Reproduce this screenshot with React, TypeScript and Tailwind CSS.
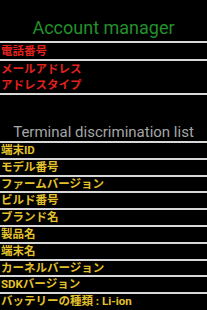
const accountItems = [['電話番号'], ['メールアドレス', 'アドレスタイプ']];

const terminalItems = [
  '端末ID',
  'モデル番号',
  'ファームバージョン',
  'ビルド番号',
  'ブランド名',
  '製品名',
  '端末名',
  'カーネルバージョン',
  'SDKバージョン',
  'バッテリーの種類 : Li-ion',
];

const jp = "font-['Roboto','Noto_Sans_CJK_JP',sans-serif] font-bold text-[11.5px]";

function Divider() {
  return <div className="h-[2px] bg-[#d8d8d8]" />;
}

export default function App() {
  return (
    <div className="w-[207px] h-[310px] overflow-hidden bg-black font-['Roboto','Noto_Sans_CJK_JP',sans-serif]">
      <div className="pt-[17px] pb-[3px] text-center text-[18px] leading-[21px] text-[#23912a]">
        Account manager
      </div>
      <Divider />
      {accountItems.map((group, i) => (
        <div key={i}>
          {group.map((label) => (
            <div key={label} className={`${jp} h-[16px] leading-[16px] text-[#e0221f] pl-[1px]`}>
              {label}
            </div>
          ))}
          <Divider />
        </div>
      ))}
      <div className="pt-[29px] pb-[1px] text-center text-[15px] leading-[16px] text-[#a6a6a6]">
        Terminal discrimination list
      </div>
      <Divider />
      {terminalItems.map((label, i) => (
        <div key={label}>
          <div className={`${jp} h-[14.8px] leading-[14.8px] text-[#e3c12c] pl-[1px] whitespace-nowrap`}>
            {label}
          </div>
          {i < terminalItems.length - 1 && <Divider />}
        </div>
      ))}
    </div>
  );
}
